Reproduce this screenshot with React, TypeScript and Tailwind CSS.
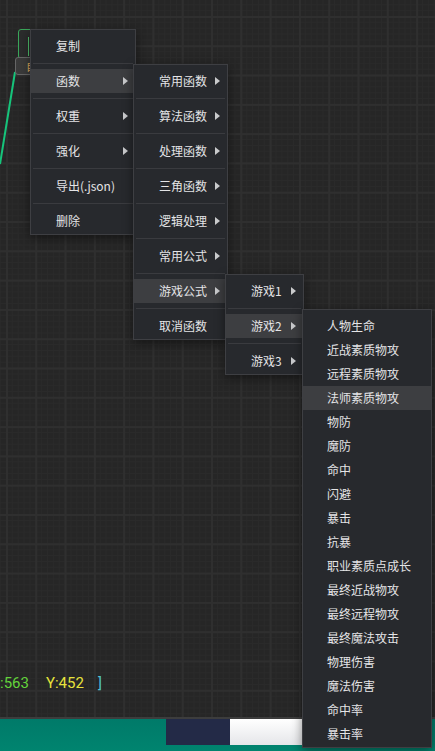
import React from "react";

type Entry = { label: string; sub?: boolean; active?: boolean };

const menu1: Entry[] = [
  { label: "复制" },
  { label: "函数", sub: true, active: true },
  { label: "权重", sub: true },
  { label: "强化", sub: true },
  { label: "导出(.json)" },
  { label: "删除" },
];

const menu2: Entry[] = [
  { label: "常用函数", sub: true },
  { label: "算法函数", sub: true },
  { label: "处理函数", sub: true },
  { label: "三角函数", sub: true },
  { label: "逻辑处理", sub: true },
  { label: "常用公式", sub: true },
  { label: "游戏公式", sub: true, active: true },
  { label: "取消函数" },
];

const menu3: Entry[] = [
  { label: "游戏1", sub: true },
  { label: "游戏2", sub: true, active: true },
  { label: "游戏3", sub: true },
];

const menu4: Entry[] = [
  "人物生命",
  "近战素质物攻",
  "远程素质物攻",
  "法师素质物攻",
  "物防",
  "魔防",
  "命中",
  "闪避",
  "暴击",
  "抗暴",
  "职业素质点成长",
  "最终近战物攻",
  "最终远程物攻",
  "最终魔法攻击",
  "物理伤害",
  "魔法伤害",
  "命中率",
  "暴击率",
].map((label, i) => ({ label, active: i === 3 }));

function Arrow() {
  return (
    <svg width="5" height="8" viewBox="0 0 5 8" className="ml-auto shrink-0">
      <path d="M0 0 L5 4 L0 8 Z" fill="#c9cacc" />
    </svg>
  );
}

function Menu({
  items,
  divided,
  className,
  pad = "pl-[25px]",
}: {
  items: Entry[];
  divided?: boolean;
  className: string;
  pad?: string;
}) {
  return (
    <div
      className={`absolute border border-[#3e3f43] bg-[#27292d] pt-[4px] pb-[1px] shadow-[0_3px_10px_rgba(0,0,0,0.45)] ${className}`}
    >
      {items.map((it, i) => (
        <React.Fragment key={it.label}>
          {divided && i > 0 && <div className="mx-[2px] my-[5px] h-px bg-[#3a3b3f]" />}
          <div
            className={`flex h-[24px] items-center ${pad} pr-[7px] text-[12px] leading-none text-[#e4e4e6] ${
              it.active ? "bg-[#3d3e41]" : ""
            }`}
          >
            <span className="whitespace-nowrap">{it.label}</span>
            {it.sub && <Arrow />}
          </div>
        </React.Fragment>
      ))}
    </div>
  );
}

export default function App() {
  return (
    <div
      className="relative flex h-[751px] w-[435px] flex-col overflow-hidden bg-[#262626]"
      style={{ fontFamily: '"Noto Sans CJK SC", "Noto Sans", sans-serif' }}
    >
      {/* ── CANVAS ── */}
      <div className="relative flex-1 border-b-2 border-[#3d3d3d] bg-[#262626] bg-[linear-gradient(to_right,#2f2f2f_2px,transparent_2px),linear-gradient(to_bottom,#2f2f2f_2px,transparent_2px),linear-gradient(to_right,#2a2a2a_1px,transparent_1px),linear-gradient(to_bottom,#2a2a2a_1px,transparent_1px)] [background-position:6px_16px,6px_16px,6px_16px,6px_16px] [background-size:29.3px_29.3px,29.3px_29.3px,5.86px_5.86px,5.86px_5.86px]">
        {/* link line */}
        <svg className="absolute left-0 top-0" width="40" height="200">
          <line x1="15" y1="72" x2="0" y2="164" stroke="#16c47b" strokeWidth="2" />
        </svg>

        {/* node */}
        <div className="absolute left-[18px] top-[29px] h-[30px] w-[40px] rounded-[3px] border border-[#3aa75a] bg-[#2b2c2c]">
          <div className="ml-[9px] mt-[7px] h-[19px] w-px bg-[#4fc06c]" />
        </div>
        <div className="absolute left-[15px] top-[57px] flex h-[18px] w-[40px] items-center rounded-[3px] border border-[#666] bg-[#3a3a3a] pl-[10px] text-[11px] text-[#dba65c]">
          自
        </div>

        {/* coordinates */}
        <div
          className="absolute left-0 top-[676px] flex items-center text-[15px] leading-none"
          style={{ fontFamily: "Roboto, 'Liberation Sans', sans-serif" }}
        >
          <span className="text-[#63d33b]">:563</span>
          <span className="ml-[17px] text-[#e6e23c]">Y:452</span>
          <span className="ml-[14px] text-[#4fc4cf]">]</span>
        </div>
      </div>

      {/* ── BOTTOM BAR ── */}
      <div className="h-[32px] bg-[linear-gradient(to_bottom,#007a69,#00846f)]">
        <div className="flex h-[26px]">
          <div className="w-[166px]" />
          <div className="w-[64px] bg-[#232a47]" />
          <div className="w-[150px] bg-[linear-gradient(to_bottom,#ffffff,#e5e6e9)]" />
        </div>
      </div>

      {/* ── CONTEXT MENUS ── */}
      <Menu items={menu1} divided className="left-[30px] top-[29px] w-[106px]" />
      <Menu items={menu2} divided className="left-[133px] top-[64px] w-[95px]" />
      <Menu items={menu3} divided className="left-[225px] top-[274px] w-[79px]" />
      <Menu items={menu4} className="left-[302px] top-[309px] w-[130px]" pad="pl-[24px]" />
    </div>
  );
}
